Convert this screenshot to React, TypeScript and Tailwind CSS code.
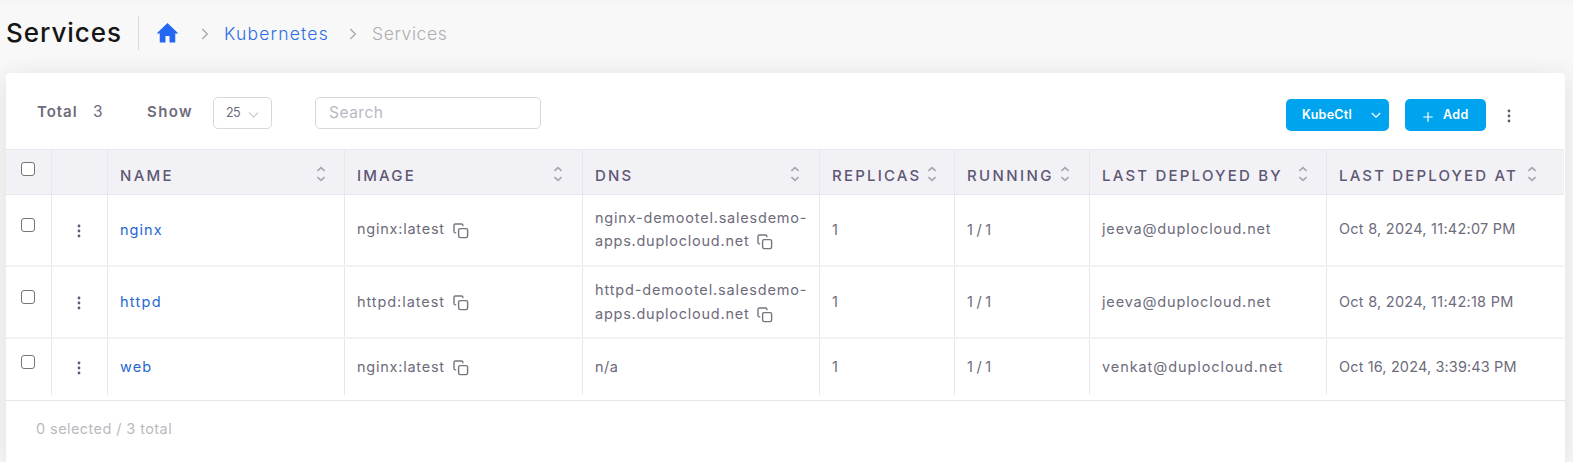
import React from 'react';

type Label = { text: string; track: string };

const Sorter = ({ className = '' }: { className?: string }) => (
  <svg className={className} width="10" height="16" viewBox="0 0 10 16" fill="none" stroke="#a9a6b5" strokeWidth="1.7">
    <path d="M1.4 4.9 5 1.6l3.6 3.3M1.4 11.1 5 14.4l3.6-3.3" />
  </svg>
);

const Dots = () => (
  <svg width="4" height="14" viewBox="0 0 4 14" fill="#5e5873">
    <circle cx="2" cy="2" r="1.4" />
    <circle cx="2" cy="7" r="1.4" />
    <circle cx="2" cy="12" r="1.4" />
  </svg>
);

const Copy = () => (
  <svg className="shrink-0" width="16" height="16" viewBox="0 0 16 16" fill="none" stroke="#77747f" strokeWidth="1.4">
    <rect x="5.6" y="5.6" width="9" height="9" rx="1.5" />
    <path d="M3.2 9.9H2.4A1.4 1.4 0 0 1 1 8.5V2.4A1.4 1.4 0 0 1 2.4 1h6.1a1.4 1.4 0 0 1 1.4 1.4v.8" />
  </svg>
);

const Chevron = () => (
  <svg width="8" height="12" viewBox="0 0 8 12" fill="none" stroke="#a6a6a8" strokeWidth="1.3">
    <path d="m1.3 1 5 5-5 5" />
  </svg>
);

const Check = () => (
  <span className="block size-[14px] rounded-[3px] border border-[#767676] bg-white" />
);

const columns = 'grid grid-cols-[46px_56px_237px_238px_237px_135px_135px_237px_237px]';
const line = 'border-r border-[#e8e7ed]';

const headers: (Label & { gap: string })[] = [
  { text: 'NAME', track: 'tracking-[2.3px]', gap: 'pr-[18px]' },
  { text: 'IMAGE', track: 'tracking-[2.15px]', gap: 'pr-[19px]' },
  { text: 'DNS', track: 'tracking-[2.2px]', gap: 'pr-[19px]' },
  { text: 'REPLICAS', track: 'tracking-[2.2px]', gap: 'pr-[17px]' },
  { text: 'RUNNING', track: 'tracking-[2.4px]', gap: 'pr-[19px]' },
  { text: 'LAST DEPLOYED BY', track: 'tracking-[2.2px]', gap: 'pr-[18px]' },
  { text: 'LAST DEPLOYED AT', track: 'tracking-[2.15px]', gap: 'pr-[27px]' },
];

type Row = {
  height: string;
  check: string;
  shift: string;
  name: Label;
  image: Label;
  dns: Label[];
  by: Label;
  at: Label;
};

const rows: Row[] = [
  {
    height: 'h-[72px] border-b-2',
    check: 'pt-[23px]',
    shift: 'pb-[2px]',
    name: { text: 'nginx', track: 'tracking-[1.05px]' },
    image: { text: 'nginx:latest', track: 'tracking-[0.76px]' },
    dns: [
      { text: 'nginx-demootel.salesdemo-', track: 'tracking-[0.78px]' },
      { text: 'apps.duplocloud.net', track: 'tracking-[0.75px]' },
    ],
    by: { text: 'jeeva@duplocloud.net', track: 'tracking-[0.83px]' },
    at: { text: 'Oct 8, 2024, 11:42:07 PM', track: 'tracking-[0.25px]' },
  },
  {
    height: 'h-[72px] border-b-2',
    check: 'pt-[23px]',
    shift: 'pb-[1px]',
    name: { text: 'httpd', track: 'tracking-[1.3px]' },
    image: { text: 'httpd:latest', track: 'tracking-[0.93px]' },
    dns: [
      { text: 'httpd-demootel.salesdemo-', track: 'tracking-[0.85px]' },
      { text: 'apps.duplocloud.net', track: 'tracking-[0.75px]' },
    ],
    by: { text: 'jeeva@duplocloud.net', track: 'tracking-[0.83px]' },
    at: { text: 'Oct 8, 2024, 11:42:18 PM', track: 'tracking-[0.25px]' },
  },
  {
    height: 'h-[56px]',
    check: 'pt-[16px]',
    shift: 'pb-[1px]',
    name: { text: 'web', track: 'tracking-[1.1px]' },
    image: { text: 'nginx:latest', track: 'tracking-[0.76px]' },
    dns: [{ text: 'n/a', track: 'tracking-[0.42px]' }],
    by: { text: 'venkat@duplocloud.net', track: 'tracking-[0.92px]' },
    at: { text: 'Oct 16, 2024, 3:39:43 PM', track: 'tracking-[0.13px]' },
  },
];

const Text = ({ text, track }: Label) => <span className={`whitespace-nowrap ${track}`}>{text}</span>;

const cell = `flex items-center pl-[12px] ${line}`;

export default function App() {
  return (
    <div className="flex h-[462px] flex-col overflow-hidden bg-[#f8f8f8] bg-linear-to-b from-[#f5f5f5] to-[#f8f8f8] to-[8px] font-[Inter,sans-serif] text-[#6e6b7b]">
      <header className="flex h-[73px] shrink-0 items-center pb-[7px] pl-[6px]">
        <h1 className="w-[132px] text-[26px] leading-none font-medium tracking-[0.95px] text-[#151515]">Services</h1>
        <div className="h-[34px] w-px bg-[#d6dce1]" />
        <svg className="ml-[17px]" width="23" height="20" viewBox="0 0 24 20" preserveAspectRatio="none" fill="#2468f2">
          <path d="M12 0 .6 10.4h3.3V19.6h6v-6.7h4.2v6.7h6v-9.2h3.3z" />
        </svg>
        <span className="ml-[22px] pt-[2px]"><Chevron /></span>
        <a className="ml-[15px] w-[108px] pt-[2px] text-[17.5px] font-light tracking-[1.2px] text-[#2d6ee6]">Kubernetes</a>
        <span className="ml-[17px] pt-[2px]"><Chevron /></span>
        <span className="ml-[15px] pt-[2px] text-[17.5px] font-light tracking-[0.6px] text-[#aeaeb2]">Services</span>
      </header>

      <main className="mr-[8px] ml-[6px] flex grow flex-col rounded-t-[4px] bg-white shadow-[0_4px_24px_0_rgba(34,41,47,0.12)]">
        <div className="flex h-[76px] shrink-0 items-center pl-[31px]">
          <span className="w-[56px] pt-[2px] text-[15px] font-semibold tracking-[0.95px]">Total</span>
          <span className="w-[54px] pt-[2px] text-[15.5px]">3</span>
          <span className="w-[66px] pt-[2px] text-[15px] font-semibold tracking-[1.4px]">Show</span>
          <div className="mt-[4px] flex h-[32px] w-[59px] items-center justify-between rounded-[5px] border border-[#d8d6de] pr-[12px] pl-[12px] text-[12.5px]">
            <span className="tracking-[-0.5px]">25</span>
            <svg className="mt-[4px]" width="11" height="8" viewBox="0 0 11 8" fill="none" stroke="#cfced4" strokeWidth="1.2">
              <path d="m1 1.5 4.5 4.7L10 1.5" />
            </svg>
          </div>
          <div className="mt-[4px] ml-[43px] flex h-[32px] w-[226px] items-center rounded-[5px] border border-[#d8d6de] pl-[13px] text-[15.5px] tracking-[0.5px] text-[#b9b9c3]">
            Search
          </div>
          <button className="mt-[8px] ml-[745px] flex h-[32px] w-[103px] items-center justify-between rounded-[5px] bg-[#00a3ee] pr-[8px] pl-[16px] pt-px text-[12.5px] font-semibold tracking-[0.29px] text-white">
            KubeCtl
            <svg width="10" height="7" viewBox="0 0 10 7" fill="none" stroke="#fff" strokeWidth="1.2">
              <path d="m.8 1 4.2 4.2L9.2 1" />
            </svg>
          </button>
          <button className="mt-[8px] ml-[16px] flex h-[32px] w-[81px] items-center rounded-[5px] bg-[#00a3ee] pl-[18px] pt-px text-[12.5px] font-semibold tracking-[0.39px] text-white">
            <svg className="mt-[2px] mr-[10px]" width="10" height="10" viewBox="0 0 10 10" stroke="#fff" strokeWidth="1.2">
              <path d="M5 .3v9.4M.3 5h9.4" />
            </svg>
            Add
          </button>
          <span className="mt-[9px] ml-[21px]"><Dots /></span>
        </div>

        <div className={`${columns} h-[46px] w-[1558px] shrink-0 border-y border-[#e8e7ed] bg-[#f2f1f6]`}>
          <div className={`flex pt-[12px] pl-[15px] ${line}`}><Check /></div>
          <div className={line} />
          {headers.map(({ text, track, gap }, i) => (
            <div key={text} className={`flex items-center justify-between pl-[12px] ${gap} ${i < 6 ? line : ''}`}>
              <span className={`w-0 pt-[8px] text-[15px] font-medium whitespace-nowrap text-[#5e5873] ${track}`}>{text}</span>
              <Sorter className="mt-[4px] shrink-0" />
            </div>
          ))}
        </div>

        {rows.map((row) => (
          <div key={row.name.text} className={`${columns} ${row.height} w-[1558px] shrink-0 border-[#f2f2f4] text-[14.5px]`}>
            <div className={`flex pl-[15px] ${row.check} ${line}`}><Check /></div>
            <div className={`flex items-center justify-center pt-px pr-[2px] ${line}`}><Dots /></div>
            <div className={`${cell} text-[#2568d0]`}><Text {...row.name} /></div>
            <div className={`${cell} ${row.shift}`}>
              <Text {...row.image} />
              <span className="ml-[8px] pt-[3px]"><Copy /></span>
            </div>
            <div className={`flex flex-col justify-center pl-[12px] leading-[23.5px] ${row.shift} ${line}`}>
              {row.dns.map((part, i) => (
                <div key={part.text} className="flex items-center">
                  <Text {...part} />
                  {i === 1 && <span className="ml-[8px] pt-[3px]"><Copy /></span>}
                </div>
              ))}
            </div>
            <div className={cell}>1</div>
            <div className={`${cell} tracking-[-0.26px]`}>1 / 1</div>
            <div className={`${cell} ${row.shift}`}><Text {...row.by} /></div>
            <div className={`flex items-center pl-[12px] ${row.shift}`}><Text {...row.at} /></div>
          </div>
        ))}

        <footer className="mt-[5px] grow border-t border-[#e6e6e8] pt-[17px] pl-[30px] text-[14.5px] tracking-[0.42px] text-[#b9b9bd]">
          0 selected / 3 total
        </footer>
      </main>
    </div>
  );
}
